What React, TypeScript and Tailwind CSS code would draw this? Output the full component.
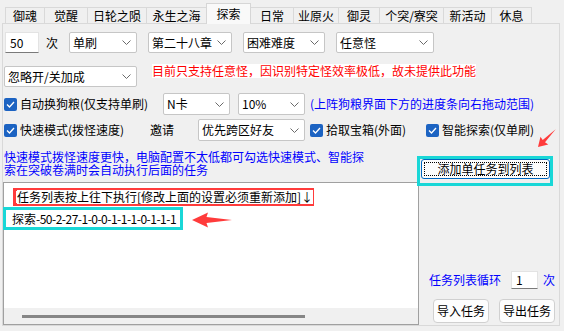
const tabs = [
  { label: '御魂', w: 'w-[40px]' },
  { label: '觉醒', w: 'w-[43px]' },
  { label: '日轮之陨', w: 'w-[59px]' },
  { label: '永生之海', w: 'w-[60px]' },
  { label: '探索', w: 'w-[45px]', active: true },
  { label: '日常', w: 'w-[43px]' },
  { label: '业原火', w: 'w-[45px]' },
  { label: '御灵', w: 'w-[41px]' },
  { label: '个突/寮突', w: 'w-[64px]' },
  { label: '新活动', w: 'w-[48px]' },
  { label: '休息', w: 'w-[40px]' },
];

function Chevron() {
  return (
    <svg width="9" height="5" viewBox="0 0 9 5" className="shrink-0">
      <path d="M0.5 0.5L4.5 4.5L8.5 0.5" fill="none" stroke="#6a6a6a" strokeWidth="1" />
    </svg>
  );
}

function Select({ text, className }: { text: string; className: string }) {
  return (
    <div
      className={`flex items-center justify-between bg-white border border-[#c6c6c6] rounded-[2px] pl-[3px] pr-[5px] shrink-0 ${className}`}
    >
      <span className="whitespace-nowrap">{text}</span>
      <Chevron />
    </div>
  );
}

function Check() {
  return (
    <span className="flex items-center justify-center w-[13px] h-[13px] rounded-[2px] bg-[#1c63c2] shrink-0">
      <svg width="9" height="7" viewBox="0 0 9 7">
        <path d="M1 3.5L3.5 6L8 1" fill="none" stroke="white" strokeWidth="1.3" />
      </svg>
    </span>
  );
}

function CheckLabel({ text, className }: { text: string; className: string }) {
  return (
    <div className={`flex items-center shrink-0 ${className}`}>
      <Check />
      <span className="ml-[3px] whitespace-nowrap">{text}</span>
    </div>
  );
}

export default function App() {
  return (
    <div className="relative w-[564px] h-[331px] overflow-hidden bg-[#f0f0f0] text-[12px] leading-[14px] text-black font-['Noto_Sans_CJK_SC',sans-serif]">
      {/* tab strip */}
      <div className="flex items-end h-[23px] pl-[5px]">
        {tabs.map((t, i) => (
          <div
            key={t.label}
            className={
              t.active
                ? `${t.w} h-[21px] -mb-[1px] relative z-10 flex items-center justify-center border border-b-0 border-[#d6d6d6] bg-[#f9f9f9] -ml-[1px]`
                : `${t.w} h-[16px] flex items-center justify-center border-t border-r border-[#d9d9d9] bg-[#f0f0f0] ${i === 0 ? 'border-l' : ''}`
            }
          >
            {t.label}
          </div>
        ))}
      </div>

      {/* tab page */}
      <div className="ml-[2px] w-[558px] h-[303px] border border-[#d9d9d9] flex flex-col">
        {/* row 1 */}
        <div className="flex items-center h-[21px] mt-[8px]">
          <div className="ml-[2px] w-[34px] h-[21px] bg-white border border-[#e3e3e3] border-b-[#7a7a7a] pl-[4px] flex items-center">
            50
          </div>
          <span className="ml-[7px] w-[12px]">次</span>
          <Select text="单刷" className="ml-[11px] w-[68px] h-[21px]" />
          <Select text="第二十八章" className="ml-[11px] w-[84px] h-[21px]" />
          <Select text="困难难度" className="ml-[11px] w-[82px] h-[21px]" />
          <Select text="任意怪" className="ml-[11px] w-[98px] h-[21px]" />
        </div>

        {/* row 2 */}
        <div className="flex items-start h-[21px] mt-[13px]">
          <Select text="忽略开/关加成" className="ml-[1px] w-[133px] h-[21px]" />
          <span className="ml-[15px] -mt-[2px] bg-white text-[#ff0000] whitespace-nowrap">
            目前只支持任意怪，因识别特定怪效率极低，故未提供此功能
          </span>
        </div>

        {/* row 3 */}
        <div className="flex items-center h-[22px] mt-[6px]">
          <CheckLabel text="自动换狗粮(仅支持单刷)" className="ml-[1px] w-[159px]" />
          <Select text="N卡" className="w-[67px] h-[22px]" />
          <Select text="10%" className="ml-[8px] w-[67px] h-[22px]" />
          <span className="ml-[5px] text-[#0000ff] whitespace-nowrap">(上阵狗粮界面下方的进度条向右拖动范围)</span>
        </div>

        {/* row 4 */}
        <div className="flex items-center h-[22px] mt-[4px]">
          <CheckLabel text="快速模式(拨怪速度)" className="ml-[1px] w-[146px]" />
          <span className="w-[48px]">邀请</span>
          <Select text="优先跨区好友" className="w-[107px] h-[22px]" />
          <CheckLabel text="拾取宝箱(外面)" className="ml-[5px] w-[116px]" />
          <CheckLabel text="智能探索(仅单刷)" className="w-[110px]" />
        </div>

        {/* bottom area */}
        <div className="flex">
          <div className="w-[416px] flex flex-col">
            <div className="mt-[9px] ml-[1px] text-[#0000ff] leading-[13px] whitespace-nowrap">
              <div>快速模式拨怪速度更快，电脑配置不太低都可勾选快速模式、智能探</div>
              <div>索在突破卷满时会自动执行后面的任务</div>
            </div>
            <div className="mt-[6px] w-[416px] h-[143px] bg-white border border-[#a0a0a0] flex flex-col">
              <div className="ml-[9px] mt-[5px] w-[301px] h-[18px] border-[3px] border-[#ff3b3b] flex items-center pl-[1px]">
                <span className="whitespace-nowrap bg-white">任务列表按上往下执行[修改上面的设置必须重新添加]↓</span>
              </div>
              <div className="-ml-[1px] mt-[1px] w-[180px] h-[23px] border-[3px] border-[#19d7d7] flex items-center pl-[6px] whitespace-nowrap">
                探索<span className="tracking-[-0.5px]">-50-2-27-1-0-0-1-1-1-0-1-1-1</span>
              </div>
              <div className="flex-1" />
              <div className="h-[16px] bg-[#f0f0f0] flex items-center">
                <div className="ml-[18px] w-[283px] h-[3px] bg-[#868686]" />
              </div>
            </div>
          </div>

          <div className="w-[140px] flex flex-col">
            <div className="relative mt-[18px] ml-[2px] w-[129px] h-[20px]">
              <div className="w-full h-full rounded-[3px] border border-[#0067c0] bg-[#fdfdfd] p-[2px]">
                <div className="w-full h-full border border-dotted border-black flex items-center justify-center whitespace-nowrap">
                  添加单任务到列表
                </div>
              </div>
              <div className="absolute -left-[4px] -top-[3px] -right-[3px] -bottom-[7px] border-[3px] border-[#19d7d7]" />
            </div>

            <div className="flex items-center h-[18px] mt-[92px]">
              <span className="ml-[10px] w-[72px] text-[#0000ff] whitespace-nowrap">任务列表循环</span>
              <div className="ml-[10px] w-[27px] h-[18px] bg-white border border-[#e3e3e3] border-b-[#7a7a7a] pl-[4px] flex items-center">
                1
              </div>
              <span className="ml-[5px] text-[#0000ff]">次</span>
            </div>

            <div className="flex mt-[10px] ml-[14px] gap-[10px]">
              <div className="w-[56px] h-[24px] rounded-[4px] border border-[#d0d0d0] bg-[#fdfdfd] flex items-center justify-center">
                导入任务
              </div>
              <div className="w-[56px] h-[24px] rounded-[4px] border border-[#d0d0d0] bg-[#fdfdfd] flex items-center justify-center">
                导出任务
              </div>
            </div>
          </div>
        </div>
      </div>

      {/* annotation arrows */}
      <svg className="absolute left-[535px] top-[128px]" width="22" height="22" viewBox="0 0 22 22">
        <g transform="translate(3,19) rotate(-45)">
          <path d="M0 0L9 -5.5L8.3 -1.6L25 0L8.3 1.6L9 5.5Z" fill="#ff3b3b" />
        </g>
      </svg>
      <svg className="absolute left-[190px] top-[210px]" width="45" height="20" viewBox="0 0 45 20">
        <g transform="translate(2,10)">
          <path d="M0 0L16 -7.5L14.5 -3L40 0L14.5 3L16 7.5Z" fill="#ff3b3b" />
        </g>
      </svg>
    </div>
  );
}
